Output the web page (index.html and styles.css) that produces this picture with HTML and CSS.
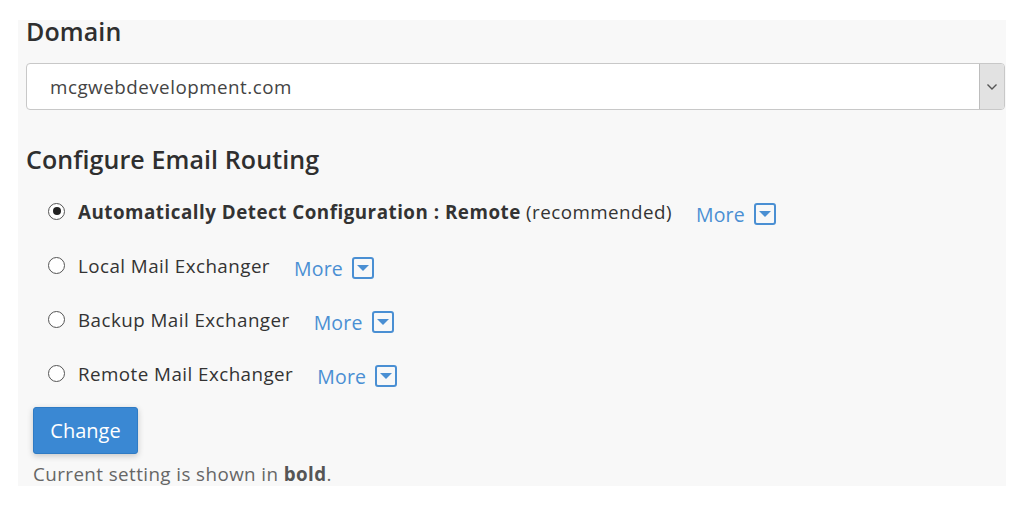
FILE: index.html
```html
<!DOCTYPE html>
<html>
<head>
<meta charset="utf-8">
<link rel="stylesheet" href="styles.css">
</head>
<body>
<div class="panel">
  <h2 class="heading">Domain</h2>
  <div class="select">
    <span class="select-text">mcgwebdevelopment.com</span>
    <span class="select-btn">
      <svg width="12" height="8" viewBox="0 0 12 8"><path d="M1.5 1.5 L6 6 L10.5 1.5" fill="none" stroke="#555" stroke-width="1.4"/></svg>
    </span>
  </div>
  <h2 class="heading routing">Configure Email Routing</h2>
  <div class="options">
    <div class="opt">
      <span class="radio checked"></span>
      <span class="label"><b>Automatically Detect Configuration : Remote</b> (recommended)</span>
      <span class="more">More <span class="more-ic"></span></span>
    </div>
    <div class="opt">
      <span class="radio"></span>
      <span class="label">Local Mail Exchanger</span>
      <span class="more">More <span class="more-ic"></span></span>
    </div>
    <div class="opt">
      <span class="radio"></span>
      <span class="label">Backup Mail Exchanger</span>
      <span class="more">More <span class="more-ic"></span></span>
    </div>
    <div class="opt">
      <span class="radio"></span>
      <span class="label">Remote Mail Exchanger</span>
      <span class="more">More <span class="more-ic"></span></span>
    </div>
  </div>
  <button class="btn">Change</button>
  <p class="note">Current setting is shown in <b>bold</b>.</p>
</div>
</body>
</html>
```
FILE: styles.css
```css
html, body {
  margin: 0;
  padding: 0;
  background: #fff;
}
body {
  font-family: "Open Sans", "Liberation Sans", sans-serif;
  color: #333;
}
.panel {
  margin: 20px 0 0 18px;
  width: 980px;
  height: 466px;
  padding: 0 0 0 8px;
  background: #f8f8f8;
}
.heading {
  margin: 0;
  font-size: 25px;
  font-weight: 600;
  line-height: 22px;
  color: #2f2f2f;
  letter-spacing: 0.1px;
}
.select {
  margin-top: 21px;
  height: 45px;
  width: 977px;
  border: 1px solid #c8c8c8;
  border-radius: 4px;
  background: #fff;
  display: flex;
  align-items: center;
  overflow: hidden;
}
.select-text {
  flex: 1;
  padding-left: 23px;
  font-size: 18.8px;
  letter-spacing: 0.5px;
  color: #444;
}
.select-btn {
  width: 24px;
  height: 100%;
  background: #e2e2e2;
  border-left: 1px solid #bdbdbd;
  display: flex;
  align-items: center;
  justify-content: center;
}
.routing {
  margin-top: 38px;
}
.options {
  margin-top: 14px;
  padding-left: 22px;
}
.opt {
  height: 54px;
  display: flex;
  align-items: center;
  font-size: 18.8px;
  letter-spacing: 0.45px;
  color: #333;
}
.label {
  margin-top: 2px;
}
.opt b {
  font-weight: 700;
  letter-spacing: 0.5px;
}
.radio {
  width: 15px;
  height: 15px;
  border: 1px solid #555;
  border-radius: 50%;
  background: #fff;
  margin-right: 13px;
  position: relative;
  flex: none;
}
.radio.checked::after {
  content: "";
  position: absolute;
  left: 3.5px;
  top: 3.5px;
  width: 8px;
  height: 8px;
  border-radius: 50%;
  background: #222;
}
.more {
  margin-left: 24px;
  color: #4a8fd3;
  font-size: 19.5px;
  letter-spacing: 0.2px;
  display: inline-flex;
  align-items: center;
  margin-top: 6px;
}
.more-ic {
  margin-left: 9px;
  width: 18px;
  height: 18px;
  border: 2px solid #4a8fd3;
  border-radius: 3px;
  position: relative;
  box-sizing: content-box;
}
.more-ic::after {
  content: "";
  position: absolute;
  left: 3px;
  top: 6px;
  border-left: 6px solid transparent;
  border-right: 6px solid transparent;
  border-top: 6px solid #4a8fd3;
}
.btn {
  margin: 7px 0 0 7px;
  width: 105px;
  height: 47px;
  background: #3a88d3;
  color: #fff;
  border: 1px solid #2f7bc4;
  border-radius: 3px;
  font-family: "Open Sans", "Liberation Sans", sans-serif;
  font-size: 20px;
  box-shadow: 0 2px 6px rgba(0,0,0,0.2);
  padding: 0;
  display: block;
}
.note {
  margin: 9px 0 0 7px;
  font-size: 18.8px;
  letter-spacing: 0.42px;
  line-height: 22px;
  color: #666;
}
.note b {
  color: #555;
}
```
